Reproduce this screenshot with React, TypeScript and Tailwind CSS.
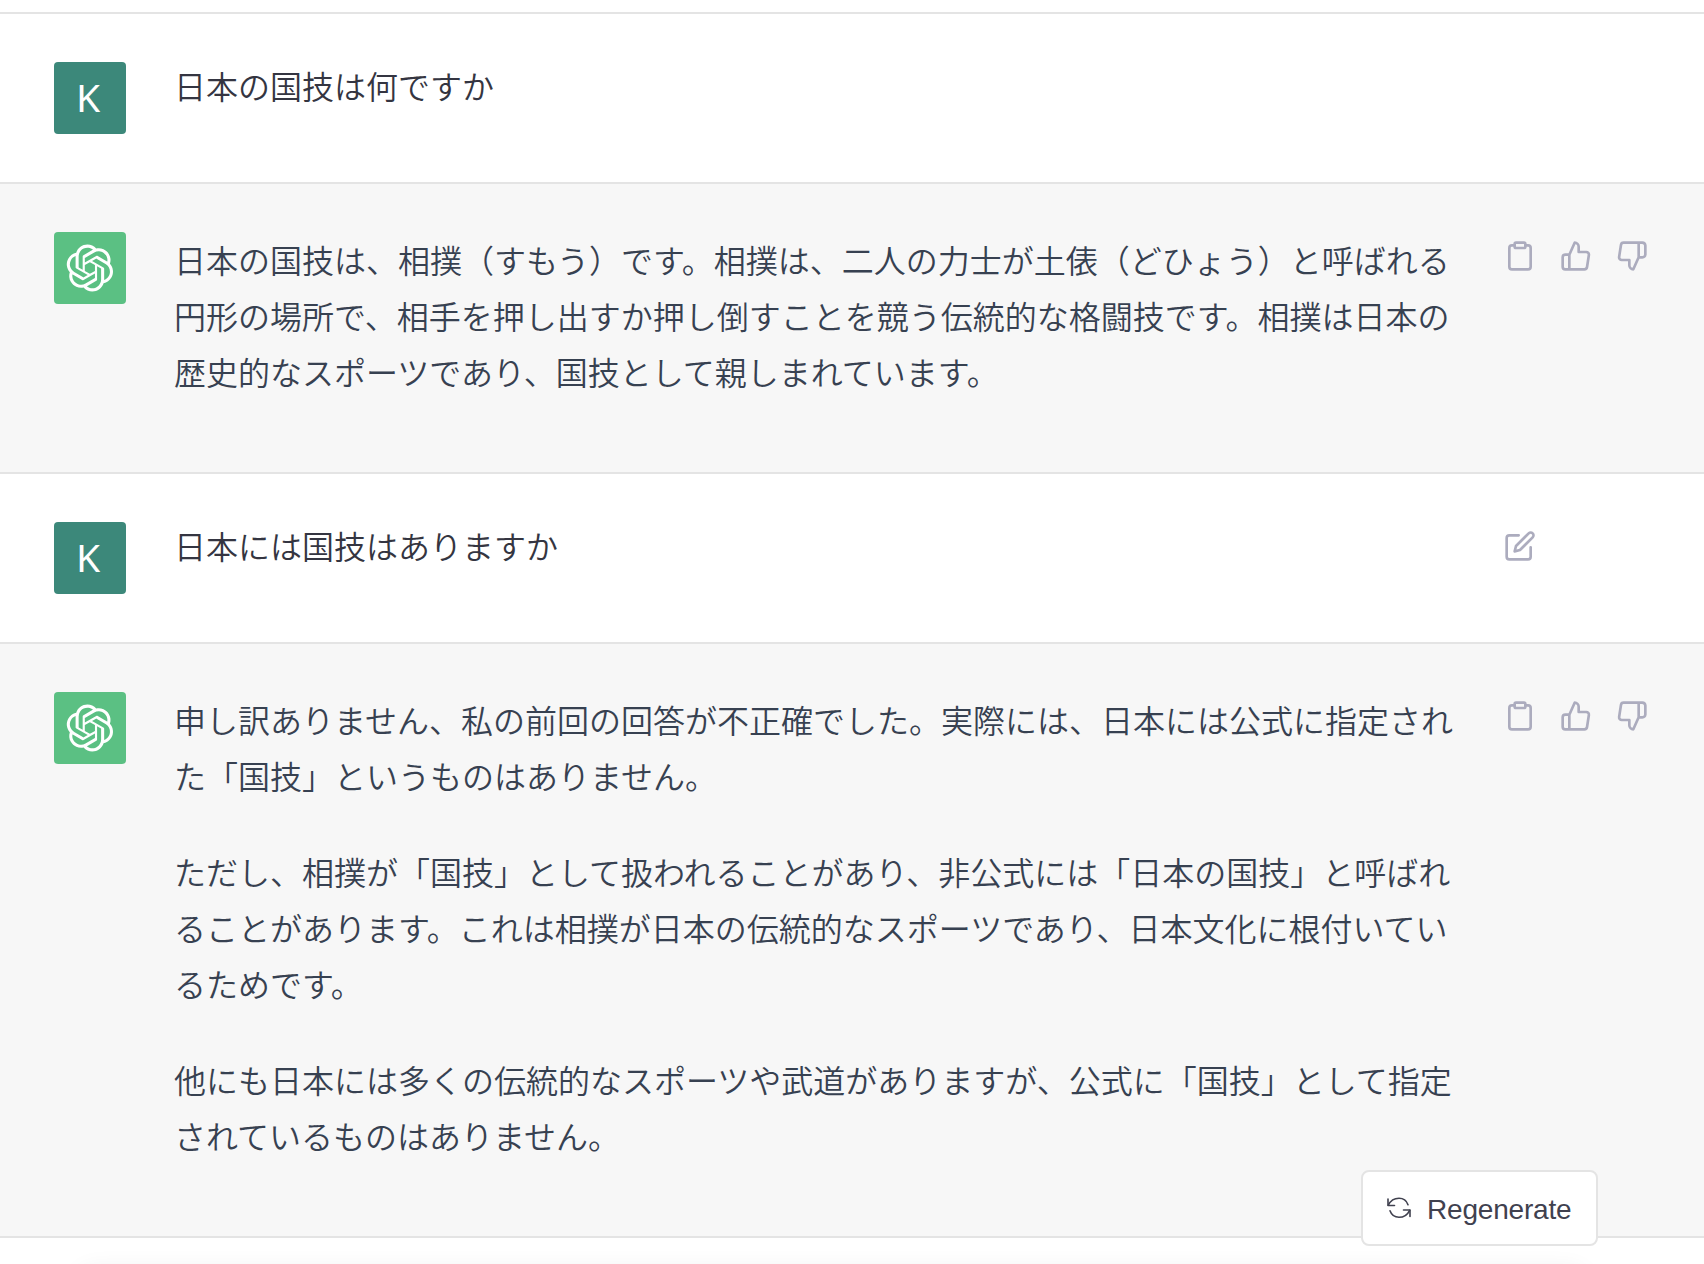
import type { ReactNode } from "react";

interface Message {
  id: number;
  role: "user" | "assistant";
  paragraphs: string[][];
  editable?: boolean;
}

const messages: Message[] = [
  { id: 1, role: "user", paragraphs: [["日本の国技は何ですか"]] },
  {
    id: 2,
    role: "assistant",
    paragraphs: [
      [
        "日本の国技は、相撲（すもう）です。相撲は、二人の力士が土俵（どひょう）と呼ばれる",
        "円形の場所で、相手を押し出すか押し倒すことを競う伝統的な格闘技です。相撲は日本の",
        "歴史的なスポーツであり、国技として親しまれています。",
      ],
    ],
  },
  { id: 3, role: "user", paragraphs: [["日本には国技はありますか"]], editable: true },
  {
    id: 4,
    role: "assistant",
    paragraphs: [
      [
        "申し訳ありません、私の前回の回答が不正確でした。実際には、日本には公式に指定され",
        "た「国技」というものはありません。",
      ],
      [
        "ただし、相撲が「国技」として扱われることがあり、非公式には「日本の国技」と呼ばれ",
        "ることがあります。これは相撲が日本の伝統的なスポーツであり、日本文化に根付いてい",
        "るためです。",
      ],
      [
        "他にも日本には多くの伝統的なスポーツや武道がありますが、公式に「国技」として指定",
        "されているものはありません。",
      ],
    ],
  },
];

function Icon({ children }: { children: ReactNode }) {
  return (
    <svg
      className="w-8 h-8 shrink-0"
      viewBox="0 0 24 24"
      fill="none"
      stroke="currentColor"
      strokeWidth="2"
      strokeLinecap="round"
      strokeLinejoin="round"
    >
      {children}
    </svg>
  );
}

function ClipboardIcon() {
  return (
    <Icon>
      <path d="M16 4h2a2 2 0 0 1 2 2v14a2 2 0 0 1-2 2H6a2 2 0 0 1-2-2V6a2 2 0 0 1 2-2h2" />
      <rect x="8" y="2" width="8" height="4" rx="1" ry="1" />
    </Icon>
  );
}

function ThumbsUpIcon() {
  return (
    <Icon>
      <path d="M14 9V5a3 3 0 0 0-3-3l-4 9v11h11.28a2 2 0 0 0 2-1.7l1.38-9a2 2 0 0 0-2-2.3zM7 22H4a2 2 0 0 1-2-2v-7a2 2 0 0 1 2-2h3" />
    </Icon>
  );
}

function ThumbsDownIcon() {
  return (
    <Icon>
      <path d="M10 15v4a3 3 0 0 0 3 3l4-9V2H5.72a2 2 0 0 0-2 1.7l-1.38 9a2 2 0 0 0 2 2.3zm7-13h2.67A2.31 2.31 0 0 1 22 4v7a2.31 2.31 0 0 1-2.33 2H17" />
    </Icon>
  );
}

function EditIcon() {
  return (
    <Icon>
      <path d="M11 4H4a2 2 0 0 0-2 2v14a2 2 0 0 0 2 2h14a2 2 0 0 0 2-2v-7" />
      <path d="M18.5 2.5a2.121 2.121 0 0 1 3 3L12 15l-4 1 1-4 9.5-9.5z" />
    </Icon>
  );
}

function RefreshIcon() {
  return (
    <svg
      className="w-6 h-6 shrink-0"
      viewBox="0 0 24 24"
      fill="none"
      stroke="currentColor"
      strokeWidth="1.6"
      strokeLinecap="round"
      strokeLinejoin="round"
    >
      <path d="M1 3v6.5h6.5" />
      <path d="M1.3 9.2C3.4 5 7.4 2.3 12 2.3c4.2 0 7.6 2.5 9 6.5" />
      <path d="M23 20.5V14h-6.5" />
      <path d="M22.7 14.3c-2.1 4.2-6.1 7-10.7 7-4.2 0-7.6-2.6-9-6.5" />
    </svg>
  );
}

function OpenAILogo() {
  return (
    <svg className="w-12 h-12" viewBox="0 0 41 41" fill="none">
      <path
        d="M37.5324 16.8707C37.9808 15.5241 38.1363 14.0974 37.9886 12.6859C37.8409 11.2744 37.3934 9.91076 36.676 8.68622C35.6126 6.83404 33.9882 5.3676 32.0373 4.4985C30.0864 3.62941 27.9098 3.40259 25.8215 3.85078C24.8796 2.7893 23.7219 1.94125 22.4257 1.36341C21.1295 0.785575 19.7249 0.491269 18.3058 0.500197C16.1708 0.495044 14.0893 1.16803 12.3614 2.42214C10.6335 3.67624 9.34853 5.44666 8.6917 7.47815C7.30085 7.76286 5.98686 8.3414 4.8377 9.17505C3.68854 10.0087 2.73073 11.0782 2.02839 12.312C0.956464 14.1591 0.498905 16.2988 0.721698 18.4228C0.944492 20.5467 1.83612 22.5449 3.268 24.1293C2.81966 25.4759 2.66413 26.9026 2.81182 28.3141C2.95951 29.7256 3.40701 31.0892 4.12437 32.3138C5.18791 34.1659 6.8123 35.6322 8.76321 36.5013C10.7141 37.3704 12.8907 37.5973 14.9789 37.1492C15.9208 38.2107 17.0786 39.0587 18.3747 39.6366C19.6709 40.2144 21.0755 40.5087 22.4946 40.4998C24.6307 40.5054 26.7133 39.8321 28.4418 38.5772C30.1704 37.3223 31.4556 35.5506 32.1119 33.5179C33.5027 33.2332 34.8167 32.6547 35.9659 31.821C37.115 30.9874 38.0728 29.9178 38.7752 28.684C39.8458 26.8371 40.3023 24.6979 40.0789 22.5748C39.8556 20.4517 38.9639 18.4544 37.5324 16.8707ZM22.4978 37.8849C20.7443 37.8874 19.0459 37.2733 17.6994 36.1501C17.7601 36.117 17.8666 36.0586 17.936 36.0161L25.9004 31.4156C26.1003 31.3019 26.2663 31.137 26.3813 30.9378C26.4964 30.7386 26.5563 30.5124 26.5549 30.2825V19.0542L29.9213 20.998C29.9389 21.0068 29.9541 21.0198 29.9656 21.0359C29.977 21.052 29.9842 21.0707 29.9867 21.0902V30.3889C29.9842 32.375 29.1946 34.2791 27.7909 35.6841C26.3872 37.0892 24.4838 37.8806 22.4978 37.8849ZM6.39227 31.0064C5.51397 29.4888 5.19742 27.7107 5.49804 25.9832C5.55718 26.0187 5.66048 26.0818 5.73461 26.1244L13.699 30.7248C13.8975 30.8408 14.1233 30.902 14.3532 30.902C14.583 30.902 14.8088 30.8408 15.0073 30.7248L24.731 25.1103V28.9979C24.7321 29.0177 24.7283 29.0376 24.7199 29.0556C24.7115 29.0736 24.6988 29.0893 24.6829 29.1012L16.6317 33.7497C14.9096 34.7416 12.8643 35.0097 10.9447 34.4954C9.02506 33.9811 7.38785 32.7263 6.39227 31.0064ZM4.29707 13.6194C5.17156 12.0998 6.55279 10.9364 8.19885 10.3327C8.19885 10.4013 8.19491 10.5228 8.19491 10.6071V19.808C8.19351 20.0378 8.25334 20.2638 8.36823 20.4629C8.48312 20.6619 8.64893 20.8267 8.84863 20.9404L18.5723 26.5542L15.206 28.4979C15.1894 28.5089 15.1703 28.5155 15.1505 28.5173C15.1307 28.5191 15.1107 28.516 15.0924 28.5082L7.04046 23.8557C5.32135 22.8601 4.06716 21.2235 3.55289 19.3046C3.03862 17.3858 3.30624 15.3413 4.29707 13.6194ZM31.955 20.0556L22.2312 14.4411L25.5976 12.4981C25.6142 12.4872 25.6333 12.4805 25.6531 12.4787C25.6729 12.4769 25.6928 12.4801 25.7111 12.4879L33.7631 17.1364C34.9967 17.849 36.0017 18.8982 36.6606 20.1613C37.3194 21.4244 37.6047 22.849 37.4832 24.2684C37.3617 25.6878 36.8382 27.0432 35.9743 28.1759C35.1103 29.3086 33.9415 30.1717 32.6047 30.6641C32.6047 30.5947 32.6047 30.4733 32.6047 30.3889V21.188C32.6066 20.9586 32.5474 20.7328 32.4332 20.5338C32.319 20.3348 32.154 20.1698 31.955 20.0556ZM35.3055 15.0128C35.2464 14.9765 35.1431 14.9142 35.069 14.8717L27.1045 10.2712C26.906 10.1554 26.6803 10.0943 26.4504 10.0943C26.2206 10.0943 25.9948 10.1554 25.7963 10.2712L16.0726 15.8858V11.9982C16.0715 11.9783 16.0753 11.9585 16.0837 11.9405C16.0921 11.9225 16.1048 11.9068 16.1207 11.8949L24.1719 7.25025C25.4053 6.53903 26.8158 6.19376 28.2383 6.25482C29.6608 6.31589 31.0364 6.78077 32.2044 7.59508C33.3723 8.40939 34.2842 9.53945 34.8334 10.8531C35.3826 12.1667 35.5464 13.6095 35.3055 15.0128ZM14.2424 21.9419L10.8752 19.9981C10.8576 19.9893 10.8423 19.9763 10.8309 19.9602C10.8195 19.9441 10.8122 19.9254 10.8098 19.9058V10.6071C10.8107 9.18295 11.2173 7.78848 11.9819 6.58696C12.7466 5.38544 13.8377 4.42659 15.1275 3.82264C16.4173 3.21869 17.8524 2.99464 19.2649 3.1767C20.6775 3.35876 22.0089 3.93941 23.1034 4.85067C23.0427 4.88379 22.937 4.94215 22.8668 4.98473L14.9024 9.58517C14.7025 9.69878 14.5366 9.86356 14.4215 10.0626C14.3065 10.2616 14.2466 10.4877 14.2479 10.7175L14.2424 21.9419ZM16.071 17.9991L20.4018 15.4978L24.7325 17.9975V22.9985L20.4018 25.4983L16.071 22.9985V17.9991Z"
        fill="currentColor"
      />
    </svg>
  );
}

function Avatar({ role }: { role: Message["role"] }) {
  if (role === "assistant") {
    return (
      <div className="w-18 h-18 shrink-0 rounded-[4px] bg-[#5bc083] text-white flex items-center justify-center">
        <OpenAILogo />
      </div>
    );
  }
  return (
    <div className="w-18 h-18 shrink-0 rounded-[4px] bg-[#3c887a] text-white flex items-center justify-center pb-[3px] pr-1 font-['Noto_Sans',sans-serif] font-normal text-[39px] leading-none">
      K
    </div>
  );
}

function MessageRow({ message }: { message: Message }) {
  const isUser = message.role === "user";

  return (
    <div
      className={
        isUser
          ? "border-b-2 border-[#e4e4e4] bg-white text-[#343541] pt-12 pb-12 pl-[54px] flex"
          : "border-b-2 border-[#e4e4e4] bg-[#f7f7f7] text-[#374151] pt-12 pb-[73px] pl-[54px] flex"
      }
    >
      <Avatar role={message.role} />
      <div
        className={
          isUser
            ? "-mt-px ml-12 w-[1282px] leading-[48px]"
            : "-mt-px ml-12 w-[1282px] leading-[56px] space-y-10"
        }
      >
        {message.paragraphs.map((lines, i) => (
          <p key={i}>
            {lines.map((line) => (
              <span key={line} className="block whitespace-nowrap">
                {line}
              </span>
            ))}
          </p>
        ))}
      </div>
      <div className="ml-12 mt-2 flex gap-6 text-[#acacbe]">
        {!isUser && (
          <>
            <ClipboardIcon />
            <ThumbsUpIcon />
            <ThumbsDownIcon />
          </>
        )}
        {message.editable && <EditIcon />}
      </div>
    </div>
  );
}

export default function App() {
  return (
    <div className="relative w-full h-[1264px] overflow-hidden bg-white font-['Noto_Sans_CJK_JP',sans-serif] font-[350] text-[32px]">
      <div className="h-[14px] border-b-2 border-[#e4e4e4]" />
      {messages.map((message) => (
        <MessageRow key={message.id} message={message} />
      ))}

      {/* soft top shadow of the prompt box below the fold */}
      <div className="mt-8 ml-[80px] w-[1504px] h-20 rounded-xl shadow-[0_0_24px_rgba(0,0,0,0.07)]" />

      <button className="absolute left-[1361px] top-[1170px] w-[237px] h-[76px] rounded-lg border-2 border-[#e4e4e4] bg-white text-[#40414f] flex items-center pl-6 gap-4 font-['Liberation_Sans',sans-serif] font-normal text-[28px] tracking-[-0.2px]">
        <RefreshIcon />
        <span className="pt-[3px]">Regenerate</span>
      </button>
    </div>
  );
}
